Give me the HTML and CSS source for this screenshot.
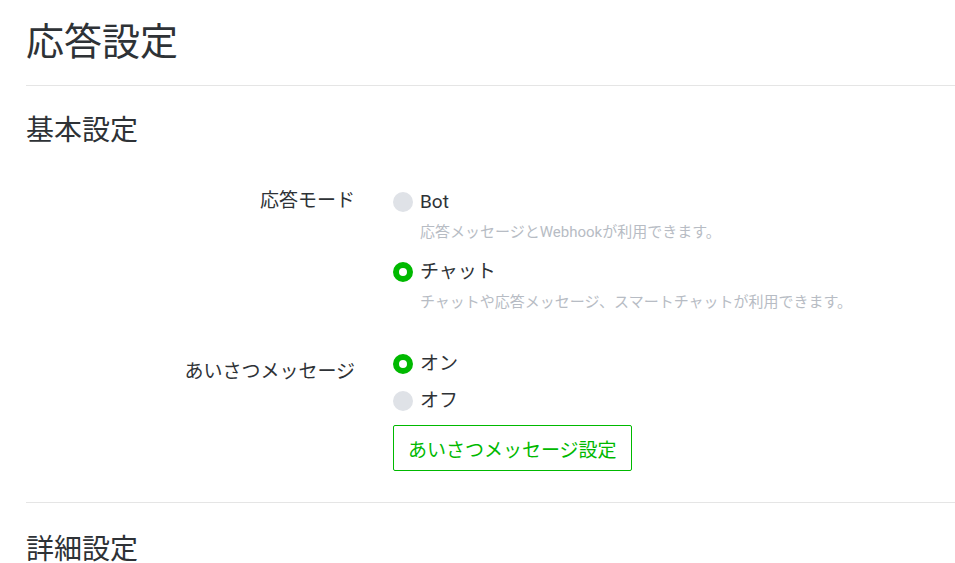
FILE: index.html
```html
<!DOCTYPE html>
<html lang="ja">
<head>
<meta charset="utf-8">
<link rel="stylesheet" href="styles.css">
</head>
<body>
<div class="page">
  <h1 class="title">応答設定</h1>
  <hr class="divider">
  <h2 class="section">基本設定</h2>
  <div class="form">
    <div class="row">
      <div class="label">応答モード</div>
      <div class="options">
        <div class="option">
          <span class="radio"></span><span class="opt-text latin">Bot</span>
        </div>
        <div class="desc">応答メッセージとWebhookが利用できます。</div>
        <div class="option gap">
          <span class="radio on"></span><span class="opt-text">チャット</span>
        </div>
        <div class="desc">チャットや応答メッセージ、スマートチャットが利用できます。</div>
      </div>
    </div>
    <div class="row row2">
      <div class="label label2">あいさつメッセージ</div>
      <div class="options">
        <div class="option">
          <span class="radio on"></span><span class="opt-text">オン</span>
        </div>
        <div class="option gap2">
          <span class="radio"></span><span class="opt-text">オフ</span>
        </div>
        <button class="btn">あいさつメッセージ設定</button>
      </div>
    </div>
  </div>
  <hr class="divider divider2">
  <h2 class="section section2">詳細設定</h2>
</div>
</body>
</html>
```
FILE: styles.css
```css
* { box-sizing: border-box; }
html, body { margin: 0; padding: 0; background: #fff; }
body {
  font-family: Roboto, "Noto Sans CJK JP", sans-serif;
  color: #2e3236;
  overflow: hidden;
}
.page { padding-left: 26px; }
.title {
  margin: 0;
  padding-top: 18px;
  font-size: 38px;
  font-weight: 400;
  line-height: 48px;
  height: 85px;
}
.divider {
  margin: 0;
  border: 0;
  border-top: 1px solid #e5e5e5;
  height: 0;
}
.section {
  margin: 0;
  padding-top: 25px;
  font-size: 28px;
  font-weight: 400;
  line-height: 40px;
}
.form { padding-top: 39px; }
.row {
  display: grid;
  grid-template-columns: 329px 1fr;
  column-gap: 38px;
}
.row2 { margin-top: 40px; }
.label {
  text-align: right;
  font-size: 19px;
  line-height: 24px;
  margin-top: -1px;
}
.label2 { margin-top: 8px; }
.options { display: flex; flex-direction: column; align-items: flex-start; }
.option {
  display: flex;
  align-items: center;
  gap: 7px;
  height: 24px;
  font-size: 19px;
}
.option.gap { margin-top: 18px; }
.option.gap2 { margin-top: 13px; }
.radio {
  width: 20px;
  height: 20px;
  border-radius: 50%;
  background: #dfe2e7;
  flex: none;
}
.radio.on {
  background: #fff;
  border: 6px solid #00b900;
}
.opt-text { line-height: 24px; }
.desc {
  margin-top: 8px;
  padding-left: 27px;
  font-size: 15px;
  line-height: 20px;
  color: #b7bcc4;
}
.btn {
  margin-top: 12px;
  height: 46px;
  padding: 0 14px;
  border: 1px solid #00b900;
  border-radius: 2px;
  background: #fff;
  color: #00b900;
  font-family: Roboto, "Noto Sans CJK JP", sans-serif;
  font-size: 19px;
  cursor: pointer;
}
.divider2 { margin-top: 31px; }
.section2 { padding-top: 27px; }
```
